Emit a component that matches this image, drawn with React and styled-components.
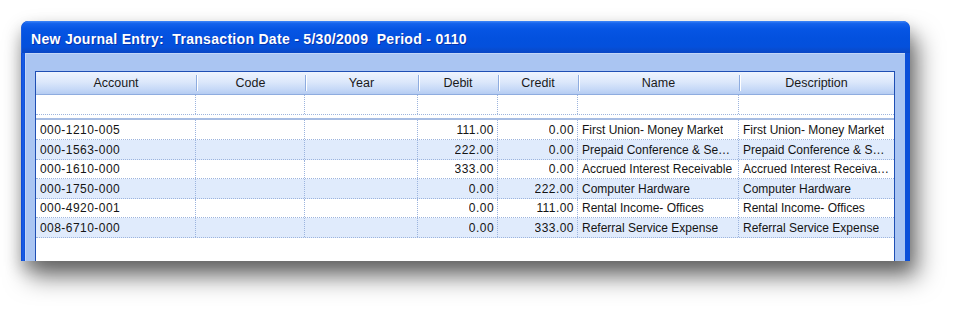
import React from "react";
import styled, { createGlobalStyle } from "styled-components";

const Global = createGlobalStyle`
  html, body { margin: 0; padding: 0; background: #ffffff; }
  body { width: 965px; height: 316px; overflow: hidden; }
`;

const Page = styled.div`
  padding: 21px 55px 0 21px;
  height: 316px;
  box-sizing: border-box;
`;

const Window = styled.div`
  width: 889px;
  height: 240px;
  display: flex;
  flex-direction: column;
  border-radius: 7px 7px 0 0;
  background: #0b4fd8;
  box-shadow: 8px 16px 24px rgba(0, 0, 0, 0.5), 0 8px 16px rgba(0, 0, 0, 0.25);
  overflow: hidden;
`;

const TitleBar = styled.div`
  height: 32px;
  flex: none;
  display: flex;
  align-items: center;
  box-sizing: border-box;
  padding: 3px 0 0 9px;
  background: linear-gradient(
    180deg,
    #3f86f7 0%,
    #1462ec 8%,
    #0655e4 25%,
    #0351de 55%,
    #0450dc 80%,
    #0a47c4 100%
  );
  border-left: 1px solid #1d5fe0;
  border-radius: 7px 7px 0 0;
`;

const Title = styled.div`
  color: #ffffff;
  font-family: "Liberation Sans", Arial, sans-serif;
  font-weight: bold;
  font-size: 14px;
  white-space: pre;
  text-shadow: 1px 1px 0 rgba(10, 24, 130, 0.55);
  letter-spacing: 0.3px;
`;

const Frame = styled.div`
  flex: 1;
  display: flex;
  padding: 0 5px 0 4px;
  background: linear-gradient(90deg, #0a45cc 0%, #1a5ee8 2px, #0b4fd8 4px);
  min-height: 0;
`;

const Content = styled.div`
  flex: 1;
  display: flex;
  flex-direction: column;
  background: #aac5f2;
  border-top: 1px solid #c2d5f7;
  border-left: 1px solid #c2d5f7;
  padding: 17px 10px 0 9px;
  min-height: 0;
`;

const Grid = styled.div`
  flex: 1;
  background: #ffffff;
  border: 1px solid #1f4fb4;
  border-bottom: none;
  display: flex;
  flex-direction: column;
  font-family: "Liberation Sans", Arial, sans-serif;
  color: #141414;
`;

const COLS = "160px 109px 113px 80px 80px 161px 1fr";

const HeaderRow = styled.div`
  display: grid;
  grid-template-columns: ${COLS};
  height: 22px;
  background: linear-gradient(180deg, #eef4fe 0%, #dce8fb 45%, #c5d8f7 80%, #b5ccf2 100%);
  border-bottom: 1px solid #8eacdf;
`;

const HeaderCell = styled.div`
  position: relative;
  display: flex;
  align-items: center;
  justify-content: center;
  font-size: 12.5px;
  color: #1a1a1a;
  &::after {
    content: "";
    display: ${(p) => (p.$last ? "none" : "block")};
    position: absolute;
    right: -1px;
    top: 3px;
    bottom: 3px;
    width: 1px;
    background: #8eacdf;
    box-shadow: 1px 0 0 #ffffff;
  }
`;

const Row = styled.div`
  display: grid;
  grid-template-columns: ${COLS};
  height: ${(p) => p.$h}px;
  box-sizing: border-box;
  background: ${(p) => (p.$alt ? "#e0ebfc" : "#ffffff")};
  border-bottom: 1px dotted #9cb4de;
`;

const Separator = styled.div`
  height: 3px;
  background: #ffffff;
  border-bottom: 2px solid #a7bde3;
`;

const Cell = styled.div`
  display: flex;
  align-items: center;
  justify-content: ${(p) => (p.$right ? "flex-end" : "flex-start")};
  padding: 0 3px 0 4px;
  font-size: 12px;
  letter-spacing: ${(p) => (p.$num ? "0.45px" : "0")};
  white-space: nowrap;
  overflow: hidden;
  border-right: ${(p) => (p.$last ? "none" : "1px dotted #9cb4de")};
  min-width: 0;
`;

const CellText = styled.span`
  overflow: hidden;
  text-overflow: ellipsis;
  white-space: nowrap;
`;

const headers = ["Account", "Code", "Year", "Debit", "Credit", "Name", "Description"];

const rows = [
  ["000-1210-005", "111.00", "0.00", "First Union- Money Market", "First Union- Money Market"],
  ["000-1563-000", "222.00", "0.00", "Prepaid Conference & Seminars", "Prepaid Conference & Seminars"],
  ["000-1610-000", "333.00", "0.00", "Accrued Interest Receivable", "Accrued Interest Receivable"],
  ["000-1750-000", "0.00", "222.00", "Computer Hardware", "Computer Hardware"],
  ["000-4920-001", "0.00", "111.00", "Rental Income- Offices", "Rental Income- Offices"],
  ["008-6710-000", "0.00", "333.00", "Referral Service Expense", "Referral Service Expense"],
];

const heights = [20, 20, 19, 20, 19, 20];

export default function App() {
  return (
    <>
      <Global />
      <Page>
        <Window>
          <TitleBar>
            <Title>{"New Journal Entry:  Transaction Date - 5/30/2009  Period - 0110"}</Title>
          </TitleBar>
          <Frame>
            <Content>
              <Grid>
                <HeaderRow>
                  {headers.map((h, i) => (
                    <HeaderCell key={h} $last={i === headers.length - 1}>
                      {h}
                    </HeaderCell>
                  ))}
                </HeaderRow>
                <Row $h={20}>
                  {headers.map((h, i) => (
                    <Cell key={h} $last={i === headers.length - 1} />
                  ))}
                </Row>
                <Separator />
                {rows.map((r, idx) => (
                  <Row key={r[0]} $alt={idx % 2 === 1} $h={heights[idx]}>
                    <Cell $num><CellText>{r[0]}</CellText></Cell>
                    <Cell />
                    <Cell />
                    <Cell $right $num><CellText>{r[1]}</CellText></Cell>
                    <Cell $right $num><CellText>{r[2]}</CellText></Cell>
                    <Cell><CellText>{r[3]}</CellText></Cell>
                    <Cell $last><CellText>{r[4]}</CellText></Cell>
                  </Row>
                ))}
              </Grid>
            </Content>
          </Frame>
        </Window>
      </Page>
    </>
  );
}
